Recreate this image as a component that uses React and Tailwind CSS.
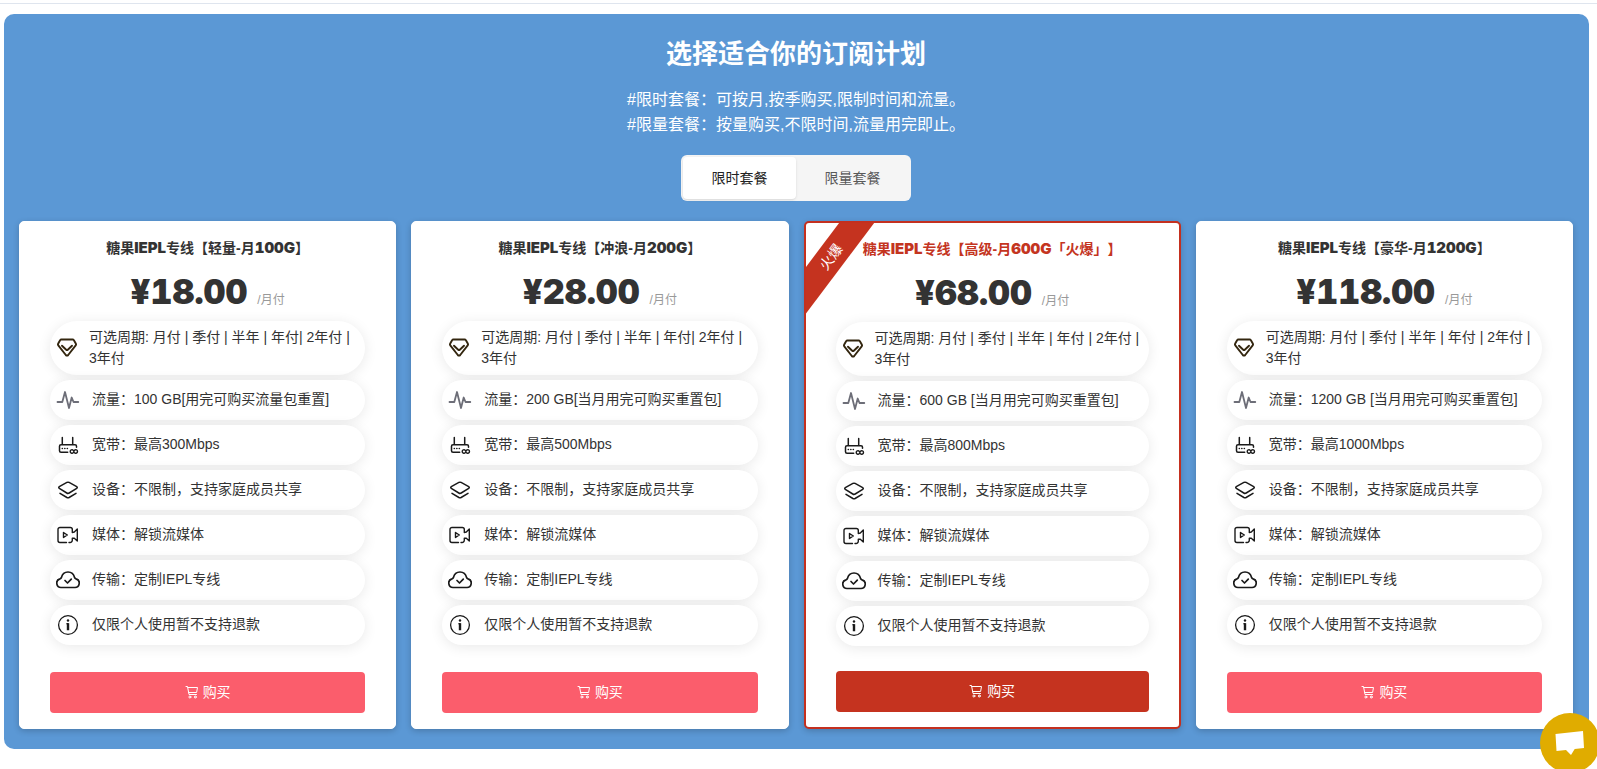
import React, { useState } from "react";

const TABS = [
  { id: "time", label: "限时套餐" },
  { id: "traffic", label: "限量套餐" },
];

const PLANS = [
  {
    id: 1,
    name: ["糖果", "IEPL", "专线【轻量-月", "100G", "】"],
    price: "¥18.00",
    cycle: "可选周期: 月付 | 季付 | 半年 | 年付| 2年付 | 3年付",
    traffic: "流量：100 GB[用完可购买流量包重置]",
    speed: "宽带：最高300Mbps",
  },
  {
    id: 2,
    name: ["糖果", "IEPL", "专线【冲浪-月", "200G", "】"],
    price: "¥28.00",
    cycle: "可选周期: 月付 | 季付 | 半年 | 年付| 2年付 | 3年付",
    traffic: "流量：200 GB[当月用完可购买重置包]",
    speed: "宽带：最高500Mbps",
  },
  {
    id: 3,
    name: ["糖果", "IEPL", "专线【高级-月", "600G", "「火爆」】"],
    price: "¥68.00",
    cycle: "可选周期: 月付 | 季付 | 半年 | 年付 | 2年付 | 3年付",
    traffic: "流量：600 GB [当月用完可购买重置包]",
    speed: "宽带：最高800Mbps",
    hot: true,
  },
  {
    id: 4,
    name: ["糖果", "IEPL", "专线【豪华-月", "1200G", "】"],
    price: "¥118.00",
    cycle: "可选周期: 月付 | 季付 | 半年 | 年付 | 2年付 | 3年付",
    traffic: "流量：1200 GB [当月用完可购买重置包]",
    speed: "宽带：最高1000Mbps",
  },
];

function Icon({ children, className = "text-[#1a1a1a]", strokeWidth = 1.5 }) {
  return (
    <svg
      viewBox="0 0 24 24"
      fill="none"
      stroke="currentColor"
      strokeWidth={strokeWidth}
      strokeLinecap="round"
      strokeLinejoin="round"
      aria-hidden="true"
      className={`size-6 shrink-0 ${className}`}
    >
      {children}
    </svg>
  );
}

function DiamondIcon() {
  return (
    <Icon className="text-[#33260f]" strokeWidth={1.9}>
      <path d="M6.300 3.500h11.400c.5 0 .9.300 1.200.700l2 3.500c.3.600.2 1.200-.2 1.700l-7.500 9.600c-.7.800-1.700.8-2.400 0L3.300 9.400c-.4-.5-.5-1.100-.2-1.700l2-3.500c.3-.4.7-.7 1.200-.7z" />
      <path d="M7 9.700l4.200 4c.5.400 1.100.400 1.600 0L17 9.700" />
    </Icon>
  );
}

function PulseIcon() {
  return (
    <Icon className="text-[#6d6e78]" strokeWidth={1.8}>
      <path d="M1.500 14h4.800L9 4l4 16 2.700-10.500 1.800 4.500h4.800" />
    </Icon>
  );
}

function RouterIcon() {
  return (
    <Icon>
      <path d="M6.300 4.500v6.800M16.700 4.500v6.800M11.700 19.300H5a1.500 1.500 0 0 1-1.500-1.500v-4.600a1.500 1.500 0 0 1 1.500-1.500h14a1.500 1.500 0 0 1 1.500 1.500v1" />
      <path d="M6.300 15.500h.1M8.800 15.500h.1M11.300 15.500h.1" strokeWidth="1.600" />
      <path d="M17.200 17.200c-1-.9-3-.3-3 1.300s2 2.300 3 1.300l1.300-2.500c1-1 3-.4 3 1.200s-2 2.300-3 1.300" strokeWidth="1.400" />
    </Icon>
  );
}

function LayersIcon() {
  return (
    <Icon>
      <path d="M10.900 4.400c.7-.3 1.500-.3 2.200 0l7.600 4.300c.8.500.8 1.200 0 1.700l-7.500 4.600c-.8.500-1.600.5-2.400 0l-7.500-4.600c-.8-.5-.8-1.200 0-1.700z" />
      <path d="M4 15.300l6.900 4.200c.8.400 1.500.4 2.200 0l6.900-4.200" />
    </Icon>
  );
}

function VideoIcon() {
  return (
    <Icon strokeWidth={1.400}>
      <path d="M10.500 19.500H4a2 2 0 0 1-2-2v-11a2 2 0 0 1 2-2h10.300a2 2 0 0 1 2 2V9.500l2-.5 3-3v12l-3-2.700h-2v1.700a2.300 2.300 0 0 1-2.300 2.500h-1" />
      <path d="M7.500 9.500v5l3.800-2.500z" />
    </Icon>
  );
}

function CloudIcon() {
  return (
    <Icon strokeWidth={1.700}>
      <path d="M5.500 19.500h13a4.400 4.400 0 0 0 1.600-8.600c-.9-.3-1.200-.6-1.500-1.300C17.800 6.300 15.200 4 12 4S6.200 6.300 5.400 9.600c-.3.700-.6 1-1.500 1.300A4.400 4.400 0 0 0 5.500 19.500z" />
      <path d="M9 12.500l2.500 2.500 3.800-3.900" />
    </Icon>
  );
}

function InfoIcon() {
  return (
    <Icon strokeWidth={1.300}>
      <circle cx="12" cy="12" r="9.400" />
      <path d="M12 7.400v.2" strokeWidth="2.400" />
      <path d="M11 10.700h1" strokeWidth="1.400" />
      <path d="M12 10.200v7" strokeWidth="2.400" strokeLinecap="butt" />
    </Icon>
  );
}

function CartIcon() {
  return (
    <svg viewBox="0 0 14 14" fill="none" stroke="currentColor" strokeLinecap="round" strokeLinejoin="round" aria-hidden="true" className="size-3.5">
      <path d="M1 1.500h1.500L4 9.500h7.500" />
      <path d="M2.900 2.500h9.600l-.9 5H3.800" />
      <circle cx="4.900" cy="12" r="1" />
      <circle cx="10.300" cy="12" r="1" />
    </svg>
  );
}

function Feature({ icon, children }) {
  return (
    <li className="flex h-10 items-center gap-3 rounded-full bg-white pl-1.5 shadow-[0_2px_14px_rgba(0,0,0,0.09)]">
      {icon}
      <span className="pb-0.5 whitespace-nowrap">{children}</span>
    </li>
  );
}

function PlanCard({ plan }) {
  const border = plan.hot ? "border-2 border-[#c4301f]" : "border border-white";
  return (
    <article className={`relative flex min-h-[508px] flex-col overflow-hidden rounded-[5px] bg-white px-[30px] pt-4 pb-[15px] shadow-[0_2px_6px_rgba(0,0,0,0.2)] ${border}`}>
      {plan.hot ? (
        <div className="absolute top-5 -left-[45px] h-7 w-[140px] -rotate-53 bg-[#c5331f] text-center text-sm leading-7 text-white">火爆</div>
      ) : null}
      <h2 className={`h-5 text-center text-sm leading-5 font-bold whitespace-nowrap [text-spacing-trim:space-all] ${plan.hot ? "text-[#c4351f]" : "text-[#333]"}`}>
        {plan.name.map((part, index) => (
          <span key={part} className={index % 2 ? "font-[Inter] text-[15px] font-black tabular-nums" : ""}>
            {part}
          </span>
        ))}
      </h2>
      <p className="mt-3.5 flex h-10 items-baseline justify-center gap-2.5 leading-10">
        <span className="font-[Inter] text-[34px] font-black text-[#333] tabular-nums">{plan.price}</span>
        <span className="text-xs text-[#999]">/月付</span>
      </p>
      <ul className="mt-[9px] mb-6 flex flex-col gap-[5px] text-sm text-[#333]">
        <li className="flex items-center gap-2.5 rounded-[27px] bg-white py-1.5 pr-1 pl-[5px] leading-[21px] shadow-[0_2px_14px_rgba(0,0,0,0.09)]">
          <DiamondIcon />
          <span>{plan.cycle}</span>
        </li>
        <Feature icon={<PulseIcon />}>{plan.traffic}</Feature>
        <Feature icon={<RouterIcon />}>{plan.speed}</Feature>
        <Feature icon={<LayersIcon />}>设备：不限制，支持家庭成员共享</Feature>
        <Feature icon={<VideoIcon />}>媒体：解锁流媒体</Feature>
        <Feature icon={<CloudIcon />}>传输：定制IEPL专线</Feature>
        <Feature icon={<InfoIcon />}>仅限个人使用暂不支持退款</Feature>
      </ul>
      <button
        type="button"
        className={`mt-auto flex h-[41px] shrink-0 items-center justify-center gap-1 rounded pb-0.5 text-sm text-white ${plan.hot ? "bg-[#c5331f]" : "bg-[#fb5d6c]"}`}
      >
        <CartIcon />
        购买
      </button>
    </article>
  );
}

export default function App() {
  const [tab, setTab] = useState("time");

  return (
    <div className="bg-white pb-5 font-['Liberation_Sans','Noto_Sans_CJK_SC',sans-serif]">
      <header className="h-1 border-b border-[#dfe5ee]" />
      <main className="mt-2.5 mr-2 ml-1 rounded-[10px] bg-[#5b98d5] pt-[22px] pr-4 pb-5 pl-[15px]">
        <h1 className="text-center text-[26px] leading-9 font-bold text-white">选择适合你的订阅计划</h1>
        <p className="mt-[15px] text-center text-base leading-[25px] text-white">
          #限时套餐：可按月,按季购买,限制时间和流量。
          <br />
          #限量套餐：按量购买,不限时间,流量用完即止。
        </p>

        <div className="mt-[18px] flex justify-center">
          <div role="tablist" className="flex rounded-md bg-[#f5f5f5] p-0.5">
            {TABS.map((item) => (
              <button
                key={item.id}
                type="button"
                role="tab"
                aria-selected={tab === item.id}
                onClick={() => setTab(item.id)}
                className={`h-[42px] w-[113px] rounded text-sm ${tab === item.id ? "bg-white text-[#222] shadow-sm" : "text-[#595959]"}`}
              >
                {item.label}
              </button>
            ))}
          </div>
        </div>

        <section className="mt-5 grid grid-cols-4 gap-[15px]">
          {PLANS.map((plan) => (
            <PlanCard key={plan.id} plan={plan} />
          ))}
        </section>
      </main>

      <button type="button" aria-label="在线客服" className="fixed -right-[3px] -bottom-1 flex size-[60px] items-center justify-center rounded-full bg-[#e0ac00]">
        <svg viewBox="0 0 30 26" fill="#fff" aria-hidden="true" className="h-[26px] w-[30px]">
          <path d="M.5 4L28 1l1 17-9.300.9-3.700 6-5-5L1.500 21z" />
        </svg>
      </button>
    </div>
  );
}
